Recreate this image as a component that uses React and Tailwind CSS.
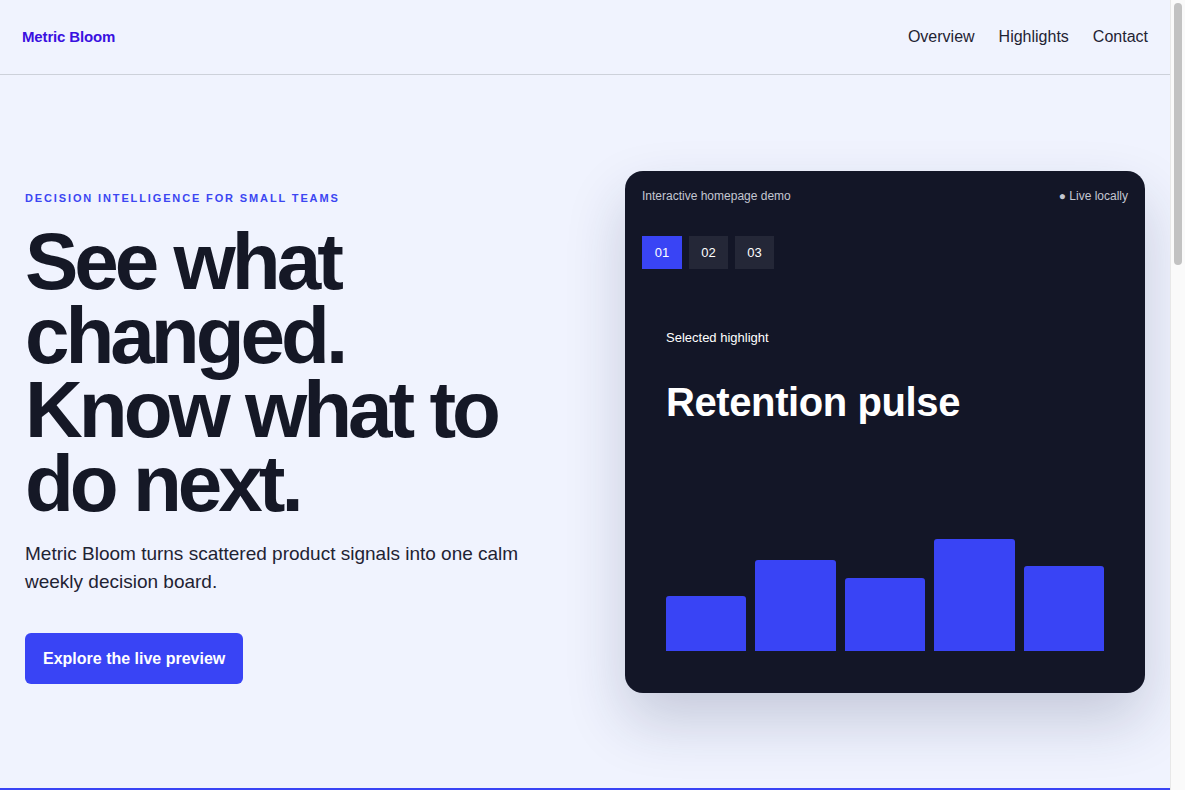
import React, { useState } from "react";

const bars = [55, 91, 73, 112, 85];

const highlights = [
  { id: "01", title: "Retention pulse" },
  { id: "02", title: "Activation drift" },
  { id: "03", title: "Revenue signals" },
];

const App = () => {
  const [active, setActive] = useState(0);

  return (
    <div
      className="flex h-screen overflow-hidden bg-[#f0f3fe] text-[#151826]"
      style={{ fontFamily: '"Liberation Sans", Arial, sans-serif' }}
    >
      <div className="w-[1170px] shrink-0 overflow-hidden">
        <header className="border-b border-[#cdd1da]">
          <div className="h-[74px] px-[22px] flex items-center justify-between">
            <a href="#" className="text-[15px] font-bold tracking-[-0.01em] text-[#3a10e0]">
              Metric Bloom
            </a>
            <nav className="flex items-center gap-6 text-[16px] text-[#1f2333]">
              <a href="#">Overview</a>
              <a href="#">Highlights</a>
              <a href="#">Contact</a>
            </nav>
          </div>
        </header>

        <main>
          <section className="px-[25px] pt-24 pb-[95px]">
            <div className="grid grid-cols-[1fr_520px] gap-10 items-center">
              <div className="pt-[10px]">
                <p className="text-[11px] font-bold tracking-[0.17em] text-[#3b46f2] uppercase">
                  Decision intelligence for small teams
                </p>
                <h1 className="mt-[19px] text-[80px] font-bold leading-[0.925] tracking-[-0.05em] text-[#151826]">
                  See what
                  <br />
                  changed.
                  <br />
                  Know what to
                  <br />
                  do next.
                </h1>
                <p className="mt-[19px] text-[19px] leading-[28px] text-[#1f2333] max-w-[520px]">
                  Metric Bloom turns scattered product signals into one calm weekly decision board.
                </p>
                <button className="mt-[37px] h-[51px] px-[18px] rounded-md bg-[#3944f5] text-white text-[16px] font-bold">
                  Explore the live preview
                </button>
              </div>

              <div className="h-[522px] rounded-[18px] bg-[#131627] shadow-[0_28px_60px_rgba(30,41,80,0.2)] px-[17px] pt-[14px] pb-[17px] flex flex-col">
                <div className="flex items-center justify-between text-[12px] text-[#c4c7d2] pt-[2px]">
                  <span>Interactive homepage demo</span>
                  <span>● Live locally</span>
                </div>
                <div className="mt-[31px] flex gap-[7px]">
                  {highlights.map((h, i) => (
                    <button
                      key={h.id}
                      onClick={() => setActive(i)}
                      className={
                        i === active
                          ? "w-[40px] h-[33px] bg-[#3944f5] text-white text-[13px]"
                          : "w-[39px] h-[33px] bg-[#242737] text-white text-[13px]"
                      }
                    >
                      {h.id}
                    </button>
                  ))}
                </div>
                <div className="flex-1 flex flex-col px-6 pt-[59px] pb-[25px]">
                  <p className="text-[13px] text-white">Selected highlight</p>
                  <h2 className="mt-[29px] text-[40px] font-bold leading-tight tracking-[-0.01em] text-white">
                    {highlights[active].title}
                  </h2>
                  <div className="mt-auto flex items-end gap-[9px]">
                    {bars.map((b, i) => (
                      <div
                        key={i}
                        className="flex-1 bg-[#3944f5] rounded-t-[3px]"
                        style={{ height: b }}
                      />
                    ))}
                  </div>
                </div>
              </div>
            </div>
          </section>

          {/* next section, only its top border shows in the first screen */}
          <section className="border-t-[3px] border-[#3944f5] min-h-[1580px]" />
        </main>
      </div>

      {/* scrollbar strip as in the screenshot */}
      <div className="w-[15px] shrink-0 h-full bg-[#fafafa] border-l border-[#e8e8e8] px-[3px] pt-[3px]">
        <div className="h-[262px] rounded-full bg-[#c2c2c2]" />
      </div>
    </div>
  );
};

export default App;
